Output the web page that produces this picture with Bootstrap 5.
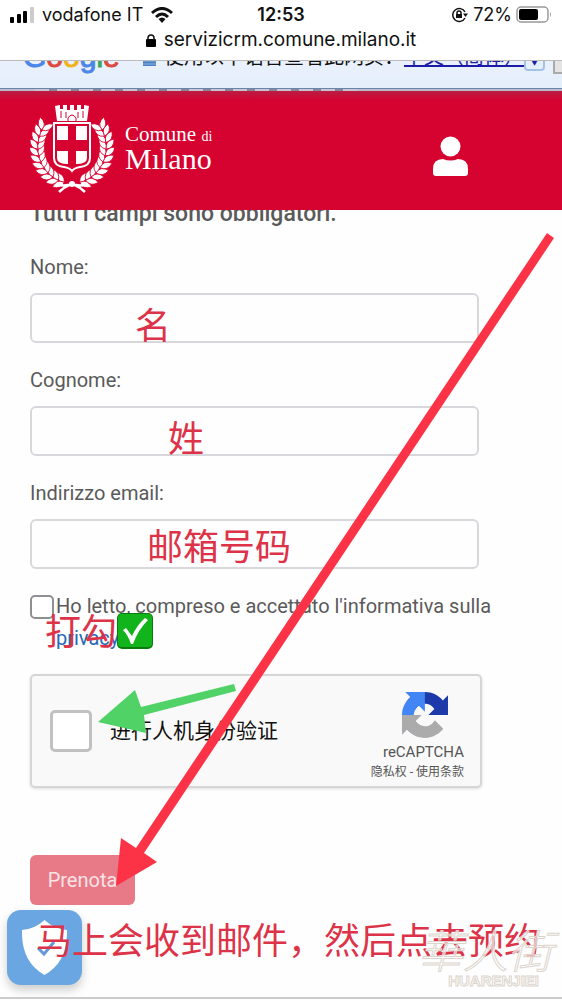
<!DOCTYPE html>
<html lang="it">
<head>
<meta charset="utf-8">
<meta name="viewport" content="width=device-width, initial-scale=1">
<title>Comune di Milano - Prenota</title>
<link href="https://cdn.jsdelivr.net/npm/bootstrap@5.3.0/dist/css/bootstrap.min.css" rel="stylesheet">
<style>
body{font-family:Roboto,"Noto Sans CJK SC",sans-serif;font-size:20px;line-height:32px;color:#5a5a5a;background:#fefefe;overflow-x:hidden}
svg{display:block}
.phone-bar{height:60px;font-family:Inter,sans-serif;color:#111;background:#fff}
.status-row{height:30px;font-size:18px;line-height:30px;padding:0 10px}
.clock{left:0;right:0;font-weight:600;text-align:center}
.address{height:20px;font-size:19px;line-height:20px}
.translate-bar{height:28px;border-top:1px solid #bbb;background:linear-gradient(#eaf1fc,#e3eefb);color:#111;font-family:"Noto Sans CJK SC",sans-serif}
.translate-row{margin-top:-21px;height:34px;line-height:32px;padding-left:23px}
.g-logo{font:30px/34px "Liberation Sans",sans-serif;-webkit-text-stroke:1px;width:120px}
.translate-row a{color:#1b1ba8}
.lang-btn{width:21px;height:31px;border:2px solid #a4c2e4;border-radius:4px;background:#e4effc;color:#1b1ba8;font-size:12px;line-height:36px}
.show-btn{width:9px;height:34px;border:2px solid #aaa;border-right:0;background:#e4e4e4}
.page-edge{height:3px;border-top:1px solid #6d84ad;background:repeating-linear-gradient(90deg,#c9c5d0 0 14px,#85879a 14px 22px) 35px 0/322px 3px no-repeat #b9bccb}
.site-head{height:119px;background:linear-gradient(#b91c42,#d6022f 10px);padding:13px 94px 0 30px;color:#fff}
.brand-name{font-family:"Liberation Serif",serif;color:#fff;padding-top:21px;margin-left:11px}
.brand-top{font-size:21px;line-height:18px}
.brand-top small{font-size:14px}
.brand-city{font-size:30px;line-height:25px}
.person{margin-top:32px}
.intro{height:41px;line-height:32px;overflow:hidden}
.intro p{margin-top:-12px;font-weight:500;font-size:23px;white-space:nowrap}
main{padding:0 30px}
.field{width:449px;max-width:100%;margin-bottom:21px}
.field label{display:block;margin-bottom:10px;line-height:32px}
.field .form-control{height:50px;border:2px solid #d8d8dc;border-radius:6px;background:#fefefe}
.note{position:absolute;color:#dd3348;font:36px/40px "Noto Sans CJK SC",sans-serif;white-space:nowrap;pointer-events:none}
.privacy{line-height:32px}
.privacy input{width:24px;height:24px;border:2px solid #8e8e93;border-radius:7px;margin:5px 2px 0 0;background-color:#fff}
.privacy a{color:#2468b8;text-decoration:none}
.tick{width:36px;height:36px}
.captcha{width:452px;max-width:100%;height:114px;margin-top:20px;border:2px solid #d6d6d6;border-radius:5px;background:#f9f9f9;box-shadow:0 1px 3px #ddd;padding:0 16px 0 18px;color:#111}
.captcha input{width:42px;height:42px;border:3px solid #c1c1c1;border-radius:4px;margin:0 18px 0 0;background-color:#fff}
.captcha label{font-size:21px}
.captcha-brand{color:#555;font-size:15px;line-height:20px;padding-top:16px}
.captcha-brand .terms{font-size:12px}
.captcha-brand a{color:inherit;text-decoration:none}
.send{height:50px;width:105px;margin-top:67px;background:#e77a86;color:#fbe3e6;border-radius:6px;font-size:20px;padding:0}
.send:hover{background:#dc6875;color:#fff}
.foot{height:94px;padding:5px 0 0 7px;border-bottom:2px solid #ccc}
.guard{width:75px;height:75px;border-radius:14px;background:#6aa7e2;box-shadow:0 5px 10px #ccc;border:0;padding:0}
.stamp{position:absolute;right:9px;top:20px;color:#fff9;-webkit-text-stroke:1px #dcd5cc;text-align:right}
.stamp-cn{font:italic 45px/48px "Noto Sans CJK TC",sans-serif;font-weight:300}
.stamp-en{font:bold 15px/16px "Liberation Sans",sans-serif;padding-right:14px}
.arrows{position:absolute;left:0;top:0;width:100%;pointer-events:none}
</style>
</head>
<body>
<div class="position-relative">
<header class="phone-bar">
  <div class="status-row position-relative d-flex align-items-center justify-content-between">
    <div class="d-flex align-items-center gap-2">
      <svg width="24" height="16"><rect y="10" width="4" height="6" rx="1"/><rect x="7" y="7" width="4" height="9" rx="1"/><rect x="13" y="4" width="4" height="12" rx="1"/><rect x="20" width="4" height="16" rx="1" fill="#ccc"/></svg>
      <span>vodafone IT</span>
      <svg width="22" height="16" viewBox="0 0 22 16" fill="none" stroke="#111" stroke-width="3"><path d="M1 6Q11-3 21 6M5 10Q11 4 17 10"/><path d="M11 16L7.500 12Q11 9 14.500 12Z" fill="#111" stroke="none"/></svg>
    </div>
    <span class="clock position-absolute">12:53</span>
    <div class="d-flex align-items-center gap-1">
      <svg width="18" height="16" viewBox="0 0 18 16" fill="none" stroke="#111" stroke-width="1.500"><path d="M14 11A6.500 6.500 0 1 1 14 5"/><path d="M12 6.500H17L14.500 10Z" fill="#111" stroke="none"/><rect x="5" y="7" width="6" height="4" fill="#111" stroke="none"/><path d="M6 7V6a2 2 0 0 1 4 0V7"/></svg>
      <span>72%</span>
      <svg width="36" height="18" viewBox="0 0 36 18"><rect x="1" y="1" width="31" height="15" rx="4" fill="none" stroke="#999" stroke-width="1.500"/><rect x="3" y="3" width="19" height="11" rx="2"/><path d="M34 6q2 2.500 0 5z" fill="#999"/></svg>
    </div>
  </div>
  <div class="address d-flex align-items-center justify-content-center gap-2">
    <svg width="10" height="13"><rect y="5" width="10" height="8" rx="1"/><path d="M2 6V4a3 3 0 0 1 6 0V6" fill="none" stroke="#111" stroke-width="1.500"/></svg>
    <span>servizicrm.comune.milano.it</span>
  </div>
</header>
<div class="translate-bar overflow-hidden">
  <div class="translate-row d-flex text-nowrap">
    <span class="g-logo"><span style="color:#4c86e8">G</span><span style="color:#dc4b40">o</span><span style="color:#f0b41c">o</span><span style="color:#4c86e8">g</span><span style="color:#3ba757">l</span><span style="color:#dc4b40">e</span></span>
    <svg class="flex-shrink-0 me-2" width="13" height="27"><rect width="13" height="26" fill="#4d82c2"/><path d="M0 21h13M0 24h13" stroke="#8cb4e0"/></svg>
    <span>使用以下语言查看此网页：</span>
    <a href="#" class="flex-shrink-0">中文（简体）</a>
    <button class="lang-btn p-0 flex-shrink-0" aria-label="语言">▼</button>
    <button class="show-btn p-0 ms-auto flex-shrink-0" aria-label="翻译"></button>
  </div>
</div>
<div class="page-edge"></div>
<nav class="site-head d-flex align-items-start justify-content-between">
  <a href="#" class="d-flex text-decoration-none">
    <svg id="crest" width="84" height="92" viewBox="0 0 84 92" fill="none" stroke="#fff">
      <path d="M25 2l2 15h30l2-15-5-1v4h-3V1h-4v5h-3V1h-4v5h-3V1h-4v4h-3V1z" fill="#fff" stroke="none"/>
      <path d="M31 7v7M36 8v6M48 8v6M53 7v7M38 17v-3q4-6 8 0v3" stroke="#d6022f"/>
      <g id="wreath" fill="#fff" stroke="#d6022f" stroke-width=".8"></g>
      <path d="M24 19H60V54Q60 62 50 63Q44 64 42 67Q40 64 34 63Q24 62 24 54Z" fill="#d6022f" stroke-width="2"/>
      <path d="M27 22H38V36H27ZM46 22H57V36H46ZM27 47H38V60Q27 60 27 54ZM46 47H57V54Q57 60 46 60Z" fill="#fff" stroke="none"/>
      <path d="M42 80Q34 83 26 80M42 80Q50 83 58 80M41 80Q34 83 29 88M43 80Q50 83 55 88" stroke-width="2.500"/>
      <circle cx="42" cy="80" r="3" fill="#fff" stroke="none"/>
    </svg>
    <div class="brand-name"><div class="brand-top">Comune <small>di</small></div><div class="brand-city">Mılano</div></div>
  </a>
  <svg class="person" width="35" height="40" viewBox="0 0 35 40" fill="#fff"><circle cx="17.500" cy="10.500" r="10"/><path d="M3 40Q0 40 0 37V33Q0 23 10 23Q17.500 26 25 23Q35 23 35 33V37Q35 40 32 40Z"/></svg>
</nav>
<main>
  <div class="intro"><p class="mb-0">Tutti i campi sono obbligatori.</p></div>
  <form onsubmit="return false">
    <div class="field position-relative"><label for="nome">Nome:</label><input id="nome" class="form-control"><span class="note" style="left:105px;top:52px">名</span></div>
    <div class="field position-relative"><label for="cognome">Cognome:</label><input id="cognome" class="form-control"><span class="note" style="left:138px;top:52px">姓</span></div>
    <div class="field position-relative"><label for="email">Indirizzo email:</label><input id="email" type="email" class="form-control"><span class="note" style="left:117px;top:47px">邮箱号码</span></div>
    <div class="privacy position-relative d-flex">
      <input class="form-check-input flex-shrink-0" type="checkbox" id="accept">
      <div><label for="accept">Ho letto, compreso e accettato l'informativa sulla</label><br><a href="#">privacy</a></div>
      <span class="note d-flex" style="left:15px;top:19px">打勾<svg class="tick mt-1" viewBox="0 0 36 36"><rect width="36" height="36" rx="5" fill="#087d0e"/><rect x="1" y="1" width="34" height="33" rx="4" fill="#11b51b"/><path d="M6 17L9 15L15 23Q20 12 28 5L31 7Q21 17 16 31H14Q11 22 6 17Z" fill="#fff"/></svg></span>
    </div>
    <div class="captcha d-flex align-items-center">
      <input class="form-check-input flex-shrink-0" type="checkbox" id="human"><label for="human" class="text-nowrap">进行人机身份验证</label>
      <div class="captcha-brand ms-auto align-self-start text-end text-nowrap">
        <svg class="d-block ms-auto me-3" width="46" height="46" viewBox="0 0 64 64"><path fill="#1c3aa9" d="M64 31.955l-.033-1.370V4.687l-7.160 7.160C50.948 4.674 42.033.093 32.050.093c-10.400 0-19.622 4.960-25.458 12.640l11.736 11.860a15.550 15.550 0 0 1 4.754-5.334c2.050-1.600 4.952-2.906 8.968-2.906.485 0 .860.057 1.135.163 4.976.393 9.288 3.140 11.828 7.124l-8.307 8.307z"/><path fill="#4285f4" d="M31.862.094l-1.370.033H4.594l7.160 7.160C4.580 13.147 0 22.060 0 32.046c0 10.400 4.960 19.622 12.640 25.458L24.500 45.768a15.550 15.550 0 0 1-5.334-4.754c-1.600-2.050-2.906-4.952-2.906-8.968 0-.485.057-.860.163-1.135.393-4.976 3.140-9.288 7.124-11.828l8.307 8.307z"/><path fill="#ababab" d="M.001 32.045l.033 1.370v25.898l7.160-7.160c5.860 7.173 14.774 11.754 24.760 11.754 10.400 0 19.622-4.960 25.458-12.640l-11.736-11.860a15.550 15.550 0 0 1-4.754 5.334c-2.050 1.600-4.952 2.906-8.968 2.906-.485 0-.860-.057-1.135-.163-4.976-.393-9.288-3.140-11.828-7.124l8.307-8.307z"/></svg>
        <div class="pt-1">reCAPTCHA</div>
        <div class="terms"><a href="#">隐私权</a> - <a href="#">使用条款</a></div>
      </div>
    </div>
    <button class="btn send d-block" type="submit">Prenota</button>
  </form>
</main>
<footer class="foot position-relative">
  <button class="guard" aria-label="Privacy"><svg class="mx-auto" width="45" height="55" viewBox="0 0 45 55"><path d="M22.500 0Q32 9 45 10Q46 42 22.500 55Q-1 42 0 10Q13 9 22.500 0Z" fill="#fff"/><path d="M16 28L22 34L32 22" fill="none" stroke="#6797d6" stroke-width="3"/></svg></button>
  <span class="note" style="left:36px;top:13px">马上会收到邮件，然后点去预约</span>
  <div class="stamp"><div class="stamp-cn">華人街</div><div class="stamp-en">HUARENJIEI</div></div>
</footer>
<svg class="arrows" viewBox="0 0 562 1000"><path fill="#fc3347" d="M116 886L121 838L136 848L547 233L554 238L144 853L157 862Z"/><path fill="#50d266" d="M98 722L135 690L141 707L234 684L236 691L144 715L146 733Z"/></svg>
</div>
<script>
// laurel leaves follow an ellipse on both sides of the shield
let leaves = '';
for (let i = 0; i < 11; i++) {
  const deg = 103 + i * 10.5, a = deg * Math.PI / 180;
  const x = 42 + 34 * Math.cos(a), y = 43 + 36 * Math.sin(a);
  for (const side of [1, -1]) for (const turn of [-35, 35]) {
    const dir = deg + 90 + turn;
    leaves += `<path transform="translate(${side < 0 ? 84 - x : x} ${y}) scale(${side} 1) rotate(${dir})" d="M0 0Q6-6 13 0Q6 6 0 0Z"/>`;
  }
}
document.getElementById('wreath').innerHTML = leaves;
</script>
<script src="https://cdn.jsdelivr.net/npm/bootstrap@5.3.0/dist/js/bootstrap.bundle.min.js"></script>
</body>
</html>
